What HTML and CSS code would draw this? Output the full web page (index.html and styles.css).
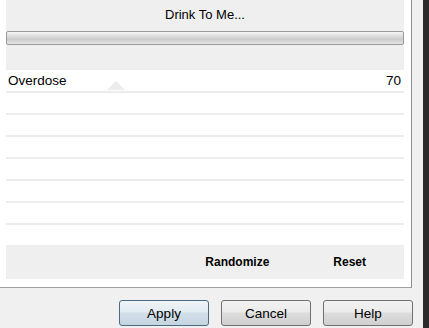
FILE: index.html
```html
<!DOCTYPE html>
<html lang="en">
<head>
    <meta charset="UTF-8">
    <meta name="viewport" content="width=device-width, initial-scale=1.0">
    <title>Drink To Me...</title>
    <link rel="stylesheet" href="styles.css">
</head>
<body>
    <div class="window">
        <div class="dialog">
            <!-- Filter panel -->
            <div class="panel">
                <div class="header">
                    <div class="title">Drink To Me...</div>
                    <div class="bar"></div>
                </div>

                <div class="params">
                    <div class="row first">
                        <span class="name">Overdose</span>
                        <span class="value">70</span>
                    </div>
                    <div class="row"></div>
                    <div class="row"></div>
                    <div class="row"></div>
                    <div class="row"></div>
                    <div class="row"></div>
                    <div class="row"></div>
                </div>

                <div class="tools">
                    <span class="tool randomize">Randomize</span>
                    <span class="tool">Reset</span>
                </div>
            </div>

            <!-- Dialog buttons -->
            <div class="footer">
                <button class="btn default">Apply</button>
                <button class="btn">Cancel</button>
                <button class="btn">Help</button>
            </div>
        </div>
        <div class="edge"></div>
    </div>
</body>
</html>
```

FILE: styles.css
```css
* { box-sizing: border-box; }
body {
    margin: 0;
    padding: 0;
    font-family: 'Liberation Sans', Arial, sans-serif;
    background-color: #f0f0f0;
    color: #000;
    overflow: hidden;
}
.window {
    display: flex;
    height: 328px;
}
.dialog {
    width: 423px;
    display: flex;
    flex-direction: column;
    background-color: #f0f0f0;
}
.edge {
    flex: 1;
    background-color: #2b2b2b;
}
.panel {
    width: 412px;
    height: 288px;
    background-color: #fff;
    border-right: 1px solid #8d8d8d;
    border-bottom: 1px solid #a0a0a0;
    padding: 0 7px 0 6px;
}
.header {
    height: 70px;
    background-color: #efefef;
    padding-top: 7px;
}
.title {
    text-align: center;
    font-size: 13px;
    line-height: 16px;
}
.bar {
    margin-top: 8px;
    height: 14px;
    border: 1px solid #9a9a9a;
    border-radius: 2px;
    background: linear-gradient(#f6f6f6 0%, #dcdcdc 35%, #cbcbcb 60%, #e4e4e4 100%);
}
.params {
    height: 175px;
}
.row {
    height: 22px;
    border-bottom: 2px solid #ececec;
    display: flex;
    justify-content: space-between;
    align-items: center;
    font-size: 13.5px;
    padding: 0 3px 0 2px;
}
.row.first {
    height: 23px;
    position: relative;
}
.row.first::after {
    content: "";
    position: absolute;
    left: 101px;
    bottom: 1px;
    border-left: 9px solid transparent;
    border-right: 9px solid transparent;
    border-bottom: 9px solid #ececec;
}
.tools {
    margin-top: 0;
    height: 34px;
    background-color: #efefef;
    display: flex;
    justify-content: flex-end;
    align-items: center;
    padding-right: 38px;
    font-size: 12px;
    font-weight: bold;
}
.tool.randomize {
    margin-right: 64px;
}
.footer {
    display: flex;
    justify-content: flex-end;
    gap: 12px;
    padding: 12px 10px 0 0;
}
.btn {
    width: 90px;
    height: 26px;
    font-family: inherit;
    font-size: 13.5px;
    color: #000;
    border: 1px solid #707070;
    border-radius: 3px;
    background: linear-gradient(#f2f2f2 0%, #ebebeb 45%, #dddddd 50%, #cfcfcf 100%);
    padding: 0;
}
.btn.default {
    border-color: #4d6a82;
    background: linear-gradient(#eef4f8 0%, #e2ecf2 45%, #d2dfe8 50%, #c4d5e0 100%);
}
```
